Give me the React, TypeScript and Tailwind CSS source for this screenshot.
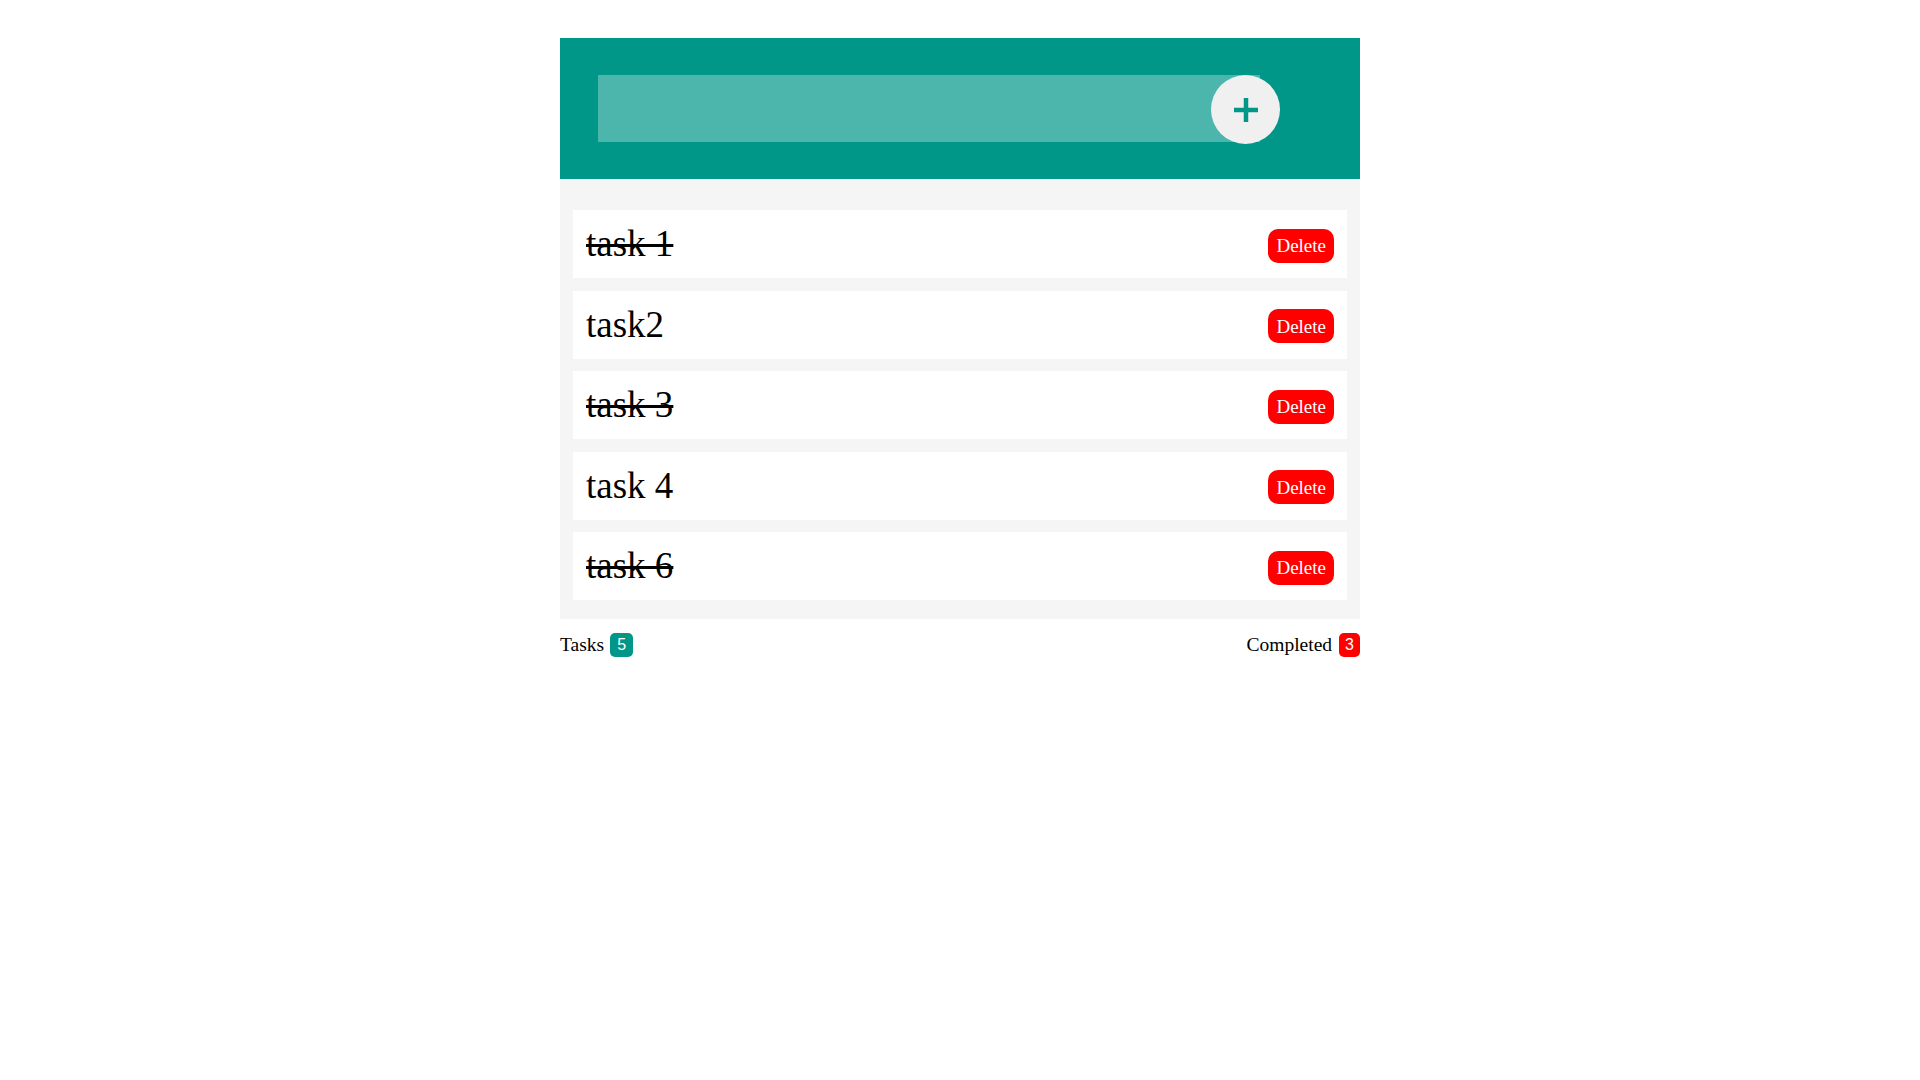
const tasks = [
    { id: 1, title: "task 1", done: true },
    { id: 2, title: "task2", done: false },
    { id: 3, title: "task 3", done: true },
    { id: 4, title: "task 4", done: false },
    { id: 6, title: "task 6", done: true },
];

const TaskRow = ({ title, done }: { title: string; done: boolean }) => {
    return (
        <li className="h-[68px] bg-white flex items-center justify-between px-[13px]">
            <span className={`text-[37px] text-black ${done ? "line-through decoration-[3px]" : ""}`}>
                {title}
            </span>
            <button className="h-[34px] px-[8px] rounded-[10px] bg-[#ff0000] text-white text-[19px] leading-none mt-[3px]">
                Delete
            </button>
        </li>
    );
};

const App = () => {
    const completed = tasks.filter((t) => t.done).length;

    return (
        <div className="w-[800px] mx-auto pt-[38px] font-['Liberation_Serif',serif]">
            <div className="h-[141px] bg-[#009688] flex items-start pt-[37px] pl-[38px]">
                <input type="text" className="w-[662px] h-[67px] bg-[#4db6ac] outline-none border-0" />
                <button className="w-[69px] h-[69px] -ml-[49px] rounded-full bg-[#f0f0f0] flex items-center justify-center">
                    <svg width="24" height="24" viewBox="0 0 24 24">
                        <path d="M12 0v24M0 12h24" stroke="#009688" strokeWidth="4.5" />
                    </svg>
                </button>
            </div>

            <ul className="bg-[#f5f5f5] pt-[31px] pb-[19px] px-[13px] flex flex-col gap-[12.5px]">
                {tasks.map((t) => (
                    <TaskRow key={t.id} title={t.title} done={t.done} />
                ))}
            </ul>

            <div className="flex justify-between items-center mt-[11px] text-[19.5px] text-black">
                <div className="flex items-center">
                    <span>Tasks</span>
                    <span className="ml-[6px] h-[24px] px-[7px] rounded-[5px] bg-[#009688] text-white text-[16px] font-['Liberation_Sans',sans-serif] flex items-center">
                        {tasks.length}
                    </span>
                </div>
                <div className="flex items-center">
                    <span>Completed</span>
                    <span className="ml-[7px] h-[24px] px-[6px] rounded-[5px] bg-[#ff0000] text-white text-[16px] font-['Liberation_Sans',sans-serif] flex items-center">
                        {completed}
                    </span>
                </div>
            </div>
        </div>
    );
};

export default App;
